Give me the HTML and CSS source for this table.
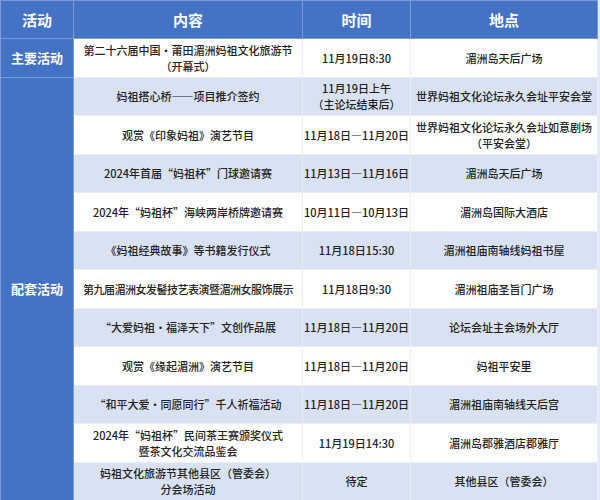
FILE: index.html
```html
<!DOCTYPE html>
<html lang="zh-CN">
<head>
<meta charset="utf-8">
<title>活动安排</title>
<link rel="stylesheet" href="styles.css">
</head>
<body>
<table class="schedule">
  <colgroup>
    <col class="c-type">
    <col class="c-content">
    <col class="c-time">
    <col class="c-place">
  </colgroup>
  <thead>
    <tr class="head">
      <th>活动</th>
      <th>内容</th>
      <th>时间</th>
      <th>地点</th>
    </tr>
  </thead>
  <tbody>
    <tr class="row white">
      <td class="type">主要活动</td>
      <td><span class="ln">第二十六届中国·莆田湄洲妈祖文化旅游节</span><span class="ln">（开幕式）</span></td>
      <td>11月19日8:30</td>
      <td>湄洲岛天后广场</td>
    </tr>
    <tr class="row blue">
      <td class="type" rowspan="11">配套活动</td>
      <td>妈祖搭心桥——项目推介签约</td>
      <td><span class="ln">11月19日上午</span><span class="ln">（主论坛结束后）</span></td>
      <td>世界妈祖文化论坛永久会址平安会堂</td>
    </tr>
    <tr class="row white">
      <td>观赏《印象妈祖》演艺节目</td>
      <td>11月18日—11月20日</td>
      <td><span class="ln">世界妈祖文化论坛永久会址如意剧场</span><span class="ln">（平安会堂）</span></td>
    </tr>
    <tr class="row blue">
      <td>2024年首届“妈祖杯”门球邀请赛</td>
      <td>11月13日—11月16日</td>
      <td>湄洲岛天后广场</td>
    </tr>
    <tr class="row white">
      <td>2024年“妈祖杯”海峡两岸桥牌邀请赛</td>
      <td>10月11日—10月13日</td>
      <td>湄洲岛国际大酒店</td>
    </tr>
    <tr class="row blue">
      <td>《妈祖经典故事》等书籍发行仪式</td>
      <td>11月18日15:30</td>
      <td>湄洲祖庙南轴线妈祖书屋</td>
    </tr>
    <tr class="row white">
      <td class="tight">第九届湄洲女发髻技艺表演暨湄洲女服饰展示</td>
      <td>11月18日9:30</td>
      <td>湄洲祖庙圣旨门广场</td>
    </tr>
    <tr class="row blue">
      <td>“大爱妈祖·福泽天下”文创作品展</td>
      <td>11月18日—11月20日</td>
      <td>论坛会址主会场外大厅</td>
    </tr>
    <tr class="row white">
      <td>观赏《缘起湄洲》演艺节目</td>
      <td>11月18日—11月20日</td>
      <td>妈祖平安里</td>
    </tr>
    <tr class="row blue">
      <td>“和平大爱·同愿同行”千人祈福活动</td>
      <td>11月18日—11月20日</td>
      <td>湄洲祖庙南轴线天后宫</td>
    </tr>
    <tr class="row white">
      <td><span class="ln">2024年“妈祖杯”民间茶王赛颁奖仪式</span><span class="ln">暨茶文化交流品鉴会</span></td>
      <td>11月19日14:30</td>
      <td>湄洲岛郡雅酒店郡雅厅</td>
    </tr>
    <tr class="row blue">
      <td><span class="ln">妈祖文化旅游节其他县区（管委会）</span><span class="ln">分会场活动</span></td>
      <td>待定</td>
      <td>其他县区（管委会）</td>
    </tr>
  </tbody>
</table>
</body>
</html>
```

FILE: styles.css
```css
html, body {
  margin: 0;
  padding: 0;
}
body {
  background: #e3e9f3;
  width: 600px;
  height: 500px;
  overflow: hidden;
}
.schedule {
  width: 597px;
  height: 500px;
  border-collapse: collapse;
  table-layout: fixed;
  font-family: "Noto Sans CJK SC", "Noto Sans", sans-serif;
  background: #ffffff;
}
.c-type { width: 73px; }
.c-content { width: 229px; }
.c-time { width: 108px; }
.c-place { width: 187px; }

.schedule th,
.schedule td {
  border: 1px solid #e9eef8;
  padding: 0;
  text-align: center;
  vertical-align: middle;
  overflow: hidden;
}
.head {
  height: 38px;
}
.head th {
  background: #4472c4;
  color: #ffffff;
  font-size: 15px;
  font-weight: 700;
  border-color: #7b9ad6;
}
.row {
  height: 38.5px;
}
.row td {
  font-size: 11px;
  line-height: 16px;
  font-weight: 500;
  color: #222222;
  white-space: nowrap;
}
.ln {
  display: block;
  height: 16px;
}
.row.blue td {
  background: #d9e2f3;
}
.row.white td {
  background: #ffffff;
}
.schedule td.type {
  background: #4472c4;
  color: #ffffff;
  font-size: 13px;
  font-weight: 700;
  border-color: #7b9ad6;
}
.schedule td.tight {
  letter-spacing: -0.5px;
}
```
